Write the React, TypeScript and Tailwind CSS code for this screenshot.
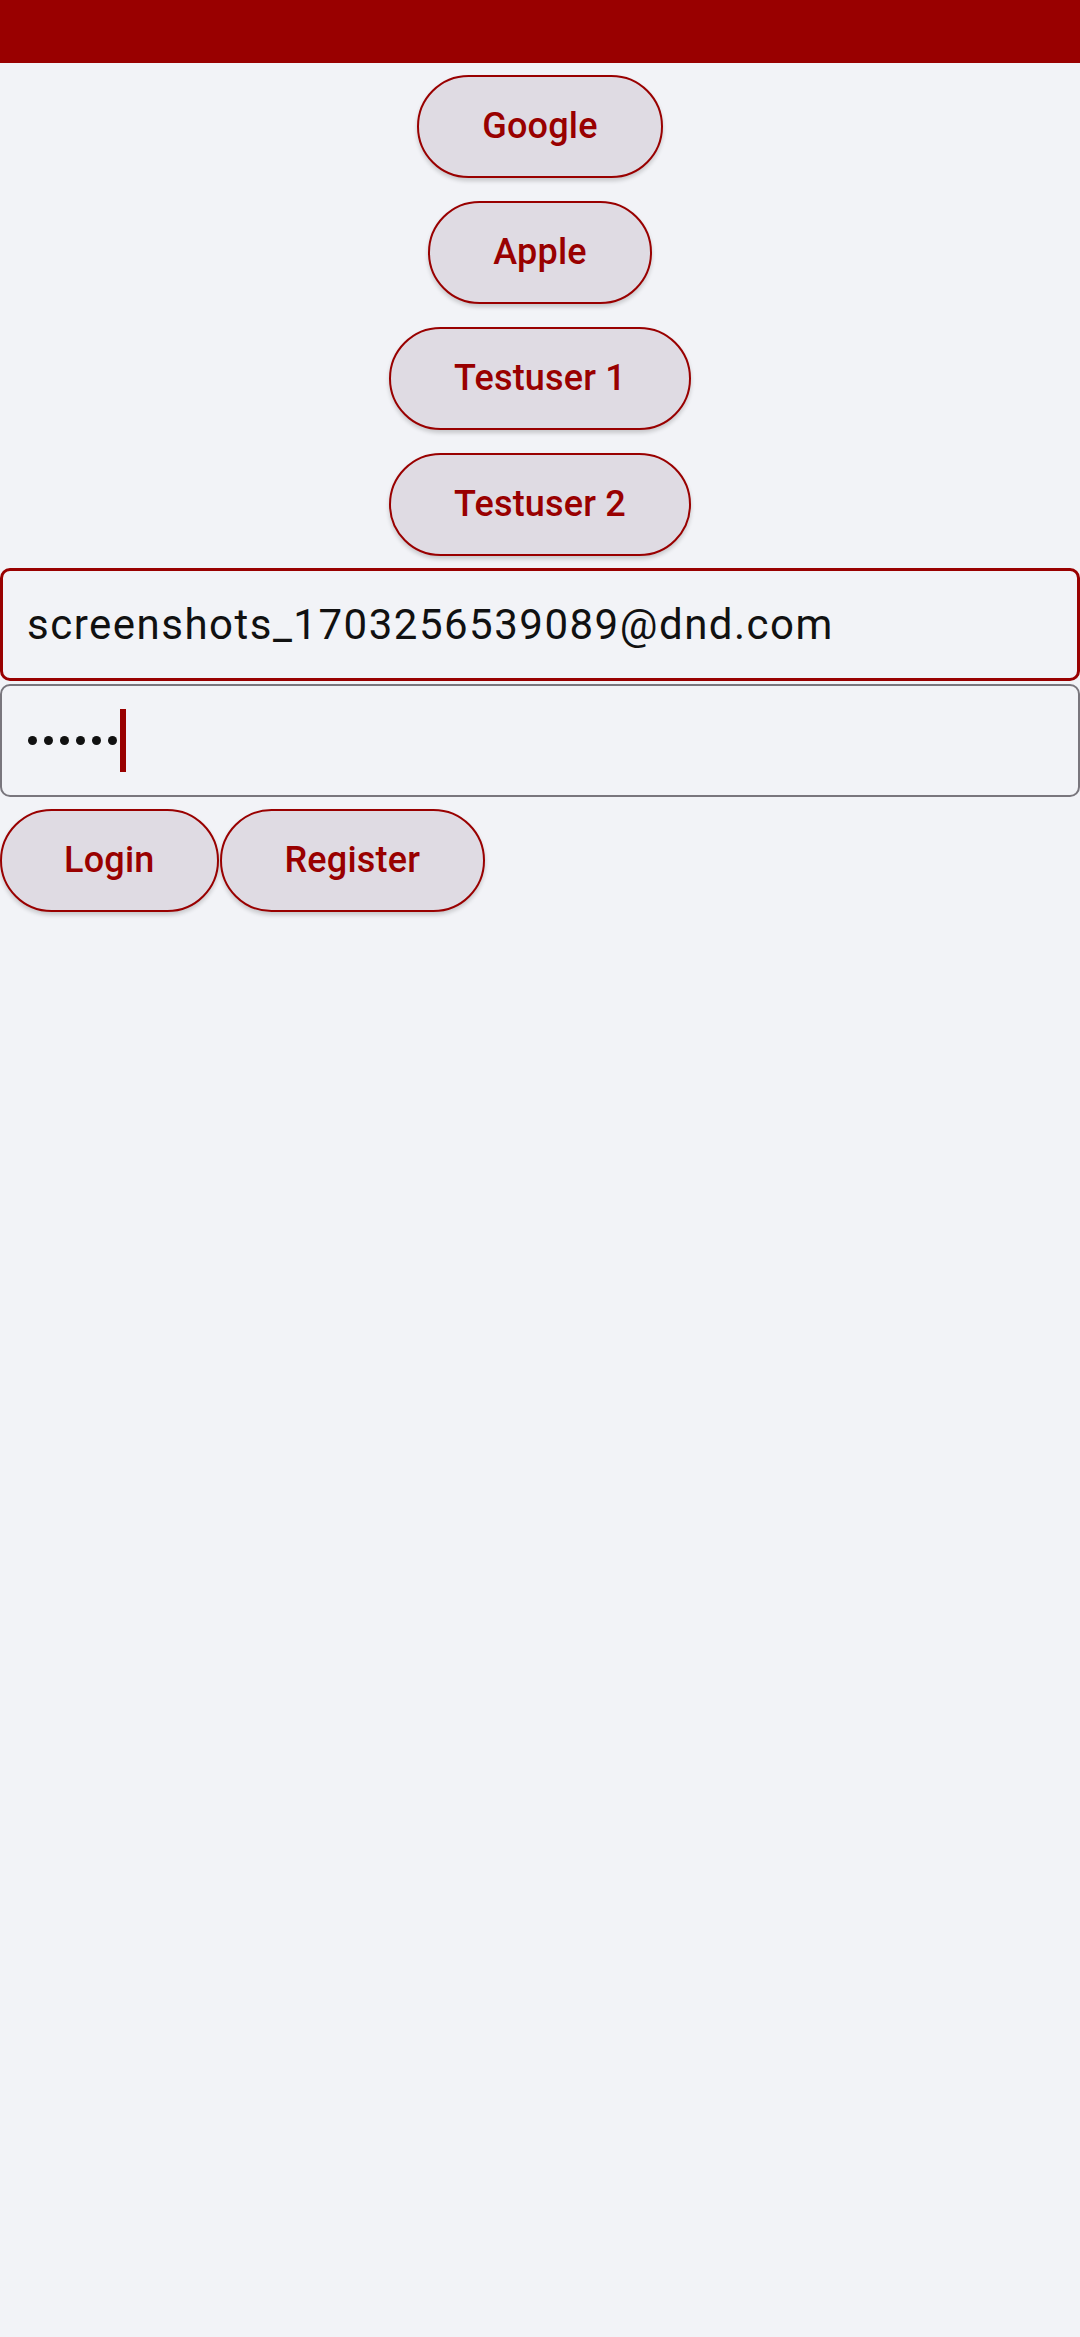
import React from 'react';

const PillButton: React.FC<{ label: string; className?: string; pad?: string }> = ({ label, className, pad }) => (
  <div className={`h-[126px] flex items-center ${className || ''}`}>
    <button
      type="button"
      className={`h-[103px] ${pad || 'px-[63px]'} rounded-[52px] border-2 border-[#990000] bg-[#dfdbe3] text-[#990000] text-[36px] font-medium tracking-[0.2px] shadow-[0_3px_4px_rgba(0,0,0,0.18)] whitespace-nowrap`}
    >
      {label}
    </button>
  </div>
);

const App: React.FC = () => {
  return (
    <div
      className="w-[1080px] h-[2337px] bg-[#f2f3f7] flex flex-col"
      style={{ fontFamily: 'Roboto, "Noto Sans", sans-serif' }}
    >
      <div className="h-[63px] bg-[#990000] shrink-0" />

      <div className="flex flex-col items-center">
        <PillButton label="Google" />
        <PillButton label="Apple" />
        <PillButton label="Testuser 1" />
        <PillButton label="Testuser 2" />
      </div>

      <div className="flex flex-col gap-[3px] mt-[1px]">
        <div className="h-[113px] rounded-[10px] border-[3px] border-[#990000] flex items-center pl-[24px]">
          <span className="text-[42px] text-[#111111] tracking-[1.5px]">
            screenshots_1703256539089@dnd.com
          </span>
        </div>
        <div className="h-[113px] rounded-[10px] border-2 border-[#79767d] flex items-center pl-[26px]">
          <div className="flex items-center gap-[7px]">
            {[0, 1, 2, 3, 4, 5].map(i => (
              <span key={i} className="w-[9px] h-[9px] rounded-full bg-[#111111]" />
            ))}
          </div>
          <span className="ml-[3px] w-[6px] h-[63px] bg-[#990000]" />
        </div>
      </div>

      <div className="flex">
        <PillButton label="Login" pad="px-[62px]" />
        <PillButton label="Register" className="ml-[1px]" />
      </div>
    </div>
  );
};

export default App;
